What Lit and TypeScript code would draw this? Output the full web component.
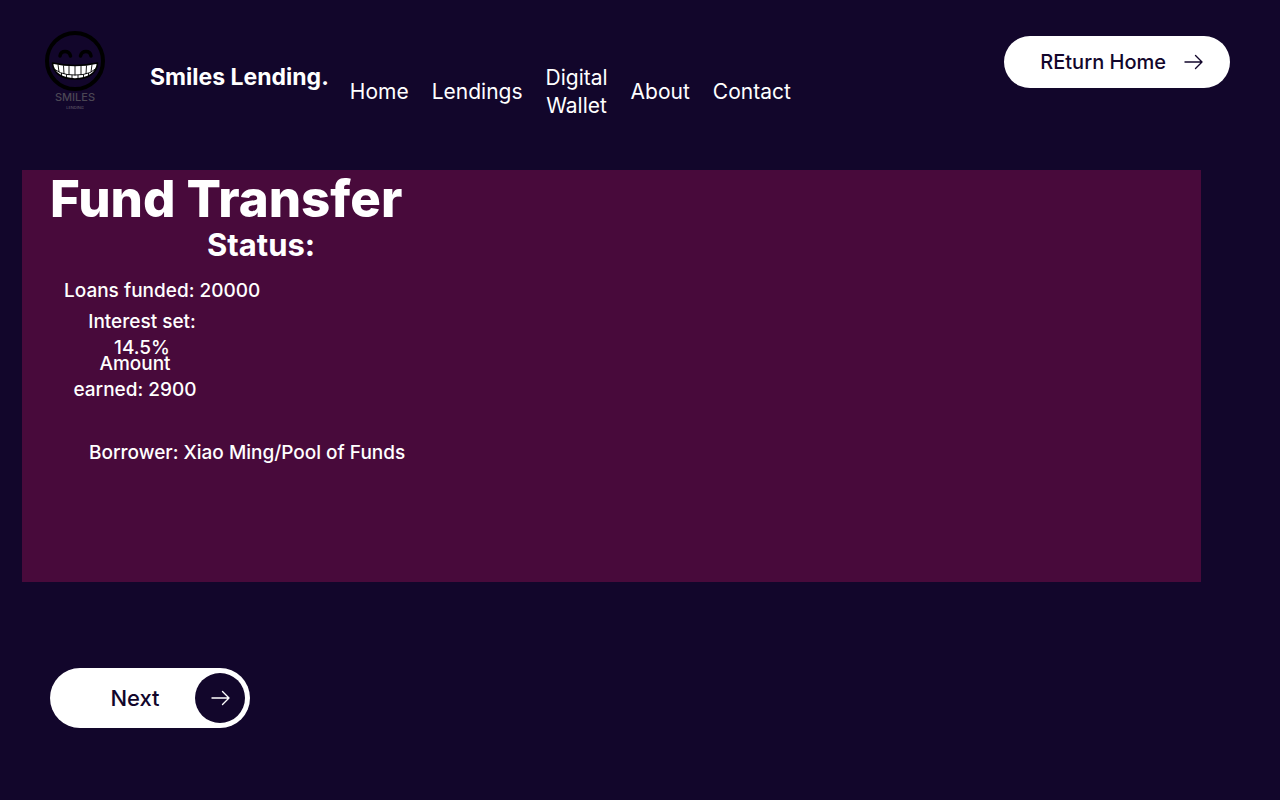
import { LitElement, html, css, svg } from "lit";
import { customElement } from "lit/decorators.js";

const arrow = svg`<path d="M1 8H18M11.5 1.5L18 8L11.5 14.5" fill="none" stroke="currentColor" stroke-width="1.4" stroke-linejoin="round" stroke-linecap="round"/>`;

@customElement("smiles-logo")
export class SmilesLogo extends LitElement {
  static styles = css`
    :host { display: block; }
    .mark { display: block; }
    .name { font: 500 11px Inter, "Open Sans", sans-serif; fill: #4b4654; }
    .sub { font: 4px Inter, "Open Sans", sans-serif; fill: #6a6573; }
  `;
  render() {
    return html`<svg class="mark" width="60" height="80" viewBox="0 0 60 80" role="img" aria-label="Smiles Lending">
      <circle cx="30" cy="31" r="28" fill="none" stroke="#000" stroke-width="4" />
      <path d="M15 26C16 20 24 20 25.500 26M35.500 26C37 20 45 20 46 26" fill="none" stroke="#000" stroke-width="3.500" stroke-linecap="round" />
      <path d="M7.500 33Q30 38 52.500 33C52 43 43 49 30 49C17 49 8 43 7.500 33Z" fill="#fff" stroke="#000" stroke-width="1.600" stroke-linejoin="round" />
      <path d="M9 39Q15 43.500 22 44.500Q30 45.500 38 44.500Q46 43.500 51 38.500M13 34.500L14 42M18.500 35.500L19 44M24 36V45M30 36V45.500M36 36V45M41.500 35.500L41 44M47 34.500L46 42M16.500 43V47M21.500 44.500V48M27 45V49M33 45V49M38.500 44.500V48M43.500 43V47" fill="none" stroke="#000" stroke-width="0.900" />
      <text class="name" x="30" y="71" text-anchor="middle">SMILES</text>
      <text class="sub" x="30" y="79" text-anchor="middle">LENDING</text>
    </svg>`;
  }
}

@customElement("app-root")
export class AppRoot extends LitElement {
  static styles = css`
    :host {
      display: block;
      box-sizing: border-box;
      min-height: 100vh;
      background: #12062b;
      color: #fff;
      font-family: Inter, "Open Sans", sans-serif;
    }
    .header {
      display: flex;
      align-items: flex-start;
      box-sizing: border-box;
      min-height: 170px;
      padding: 30px 50px 0 45px;
    }
    .brand {
      margin: 32px 0 0 45px;
      font-size: 23px;
      line-height: 30px;
      font-weight: 700;
      white-space: nowrap;
    }
    .nav {
      display: flex;
      align-items: center;
      gap: 23px;
      margin: 34px 0 0 21px;
    }
    .link {
      color: inherit;
      font-size: 21px;
      line-height: 28px;
      text-align: center;
      text-decoration: none;
    }
    .wallet { width: min-content; }
    .button {
      display: flex;
      align-items: center;
      border: 0;
      background: #fff;
      color: #12062b;
      font-family: inherit;
      font-weight: 500;
      cursor: pointer;
      white-space: nowrap;
    }
    .return {
      gap: 18px;
      height: 52px;
      margin: 6px 0 0 auto;
      padding: 0 27px 0 36px;
      border-radius: 26px;
      font-size: 20px;
    }
    .panel {
      box-sizing: border-box;
      min-height: 412px;
      margin: 0 79px 0 22px;
      padding: 0 28px;
      background: #480a3b;
    }
    .heading { width: max-content; }
    .title {
      margin: 0;
      font-size: 51px;
      line-height: 57px;
      font-weight: 800;
    }
    .status {
      margin: 0;
      padding-left: 157px;
      font-size: 31px;
      line-height: 36px;
      font-weight: 700;
    }
    .facts {
      display: flex;
      flex-direction: column;
      align-items: flex-start;
      margin: 15px 0 0;
      font-size: 19px;
      line-height: 26px;
      font-weight: 500;
    }
    .fact { margin: 0; text-align: center; }
    .loans { padding-left: 14px; }
    .interest { width: 120px; margin: 5px 0 0 32px; }
    .earned { width: 130px; margin: -10px 0 0 20px; }
    .borrower { margin: 37px 0 0 39px; }
    .next {
      width: 200px;
      height: 60px;
      margin: 86px 0 0 50px;
      padding: 5px;
      border-radius: 30px;
      font-size: 22px;
    }
    .label { flex: 1; padding-left: 20px; text-align: center; }
    .disc {
      display: grid;
      place-items: center;
      width: 50px;
      height: 50px;
      border-radius: 50%;
      background: #12062b;
      color: #fff;
    }
  `;

  render() {
    return html`
      <header class="header">
        <smiles-logo></smiles-logo>
        <div class="brand">Smiles Lending.</div>
        <nav class="nav">
          <a class="link" href="#home">Home</a>
          <a class="link" href="#lendings">Lendings</a>
          <a class="link wallet" href="#wallet">Digital Wallet</a>
          <a class="link" href="#about">About</a>
          <a class="link" href="#contact">Contact</a>
        </nav>
        <button class="button return" type="button">
          REturn Home
          <svg width="19" height="16" viewBox="0 0 19 16" aria-hidden="true">${arrow}</svg>
        </button>
      </header>
      <main>
        <section class="panel">
          <div class="heading">
            <h1 class="title">Fund Transfer</h1>
            <h2 class="status">Status:</h2>
          </div>
          <div class="facts">
            <p class="fact loans">Loans funded: 20000</p>
            <p class="fact interest">Interest set: 14.5%</p>
            <p class="fact earned">Amount earned: 2900</p>
            <p class="fact borrower">Borrower: Xiao Ming/Pool of Funds</p>
          </div>
        </section>
        <button class="button next" type="button">
          <span class="label">Next</span>
          <span class="disc">
            <svg width="19" height="16" viewBox="0 0 19 16" aria-hidden="true">${arrow}</svg>
          </span>
        </button>
      </main>
    `;
  }
}
